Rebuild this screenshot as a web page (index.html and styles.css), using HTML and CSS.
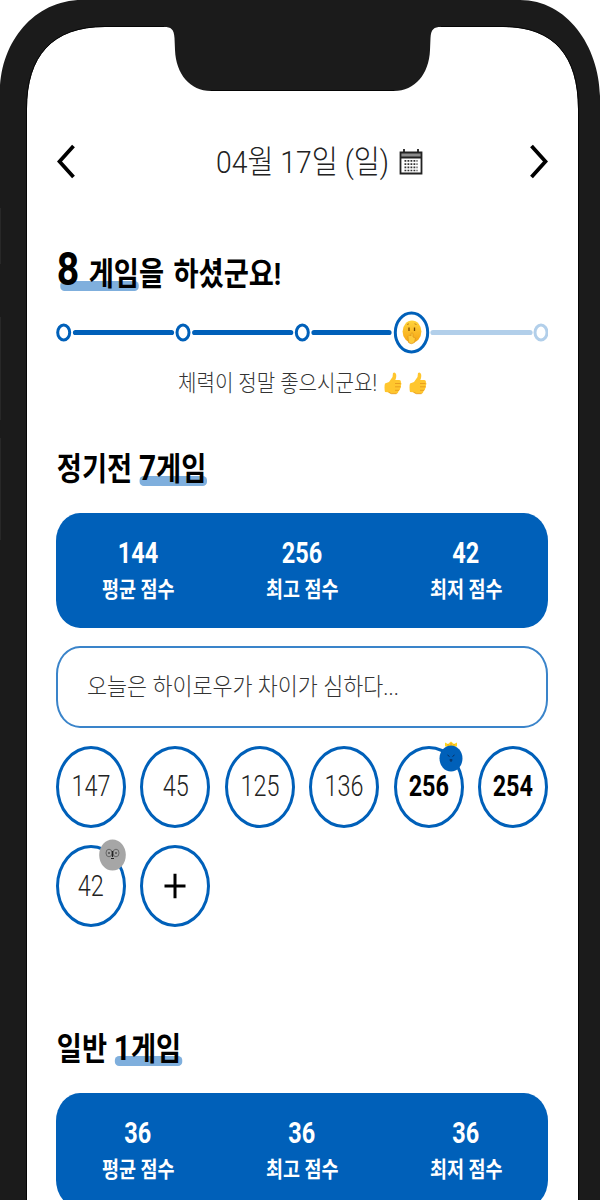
FILE: index.html
```html
<!DOCTYPE html>
<html lang="ko">
<head>
<meta charset="utf-8">
<title>볼링 점수 기록</title>
<link rel="stylesheet" href="styles.css">
</head>
<body>
<div class="phone">
  <svg class="frame" width="600" height="1200" viewBox="0 0 600 1200" aria-hidden="true">
    <path fill="#1b1b1b" fill-rule="evenodd" d="M0 1200V90C1 42 34 0 82 0H520C567 0 599 46 600 96V1200ZM27 1200V109C27 56 52 27 105 27H164C171 27 174 29 174.500 38L175 50C176 74 190 91 211 91H394C415 91 429 74 430 50L430.500 38C431 29 434 27 441 27H503C554 27 578 56 578 109V1200Z"/>
    <path fill="none" stroke="#050505" d="M26.500 1200V109C26.500 56 52 26.500 105 26.500H164M211 90.500H394M441 26.500H503C554 26.500 578.500 56 578.500 109V1200"/>
    <path stroke="#282828" d="M.5 208v56M.5 317v103M.5 438v102"/>
  </svg>
  <main class="screen">
    <header class="date-nav">
      <svg width="18" height="36" viewBox="0 0 18 36"><path class="chevron" d="M16.500 2 2.500 17.500l14 15.500"/></svg>
      <div class="date">
        <span class="date-text">04월 17일 (일)</span>
        <svg class="calendar" width="24" height="27" viewBox="0 0 24 27"><path fill="#8c8c8c" d="M2 4h20v5H2z"/><path fill="none" stroke="#222" stroke-width="1.800" d="M1.500 3.500h21v21h-21zM1.500 8.500h21M5 0v4M19 0v4"/><path stroke="#333" stroke-width="1.700" stroke-dasharray="1.800 1.200" d="M5.500 11.800h13M5.500 15.100h13M5.500 18.400h13M5.500 21.500h13"/></svg>
      </div>
      <svg width="18" height="36" viewBox="0 0 18 36"><path class="chevron" d="M1.500 2 15.500 17.500l-14 15.500"/></svg>
    </header>

    <h1 class="title summary-title"><span class="mark"><span class="big">8</span> 게임</span>을 하셨군요!</h1>
    <svg class="progress" width="492" height="44" viewBox="0 0 492 44">
      <g fill="#fff" stroke="#0060b9" stroke-width="3">
        <ellipse cx="7.700" cy="21.500" rx="6" ry="7.500"/><ellipse cx="127" cy="21.500" rx="6" ry="7.500"/><ellipse cx="246.300" cy="21.500" rx="6" ry="7.500"/>
        <ellipse cx="355.500" cy="21.500" rx="16.200" ry="19.400"/><ellipse cx="485" cy="21.500" rx="6" ry="7.500" stroke="#b2cfea"/>
      </g>
      <g fill="none" stroke="#0060b9" stroke-width="5.200" stroke-linecap="round"><path d="M19.500 21.500h96M138.700 21.500h96M258 21.500h75"/><path stroke="#b2cfea" d="M377 21.500h97"/></g>
      <defs><linearGradient id="face" x2="0" y2="1"><stop stop-color="#ffd43b"/><stop offset="1" stop-color="#f6a414"/></linearGradient></defs>
      <ellipse cx="356" cy="20.500" rx="9.400" ry="11" fill="url(#face)"/>
      <path fill="none" stroke="#754600" stroke-width="1.300" d="M353 16.500v3.500M358.500 16.500v3.500"/>
      <path fill="none" stroke="#b87512" stroke-width=".8" d="M351 13.500l2-.7M358.500 12.800l2 .7"/>
      <path fill="#fdca3a" stroke="#d98f19" stroke-width=".6" d="M352 25.500c1-1.500 2.500-1.500 3-.5v-2.500q1-1.500 2 0v3.500l2.500 1-1 4.500q-3.500 2.500-6 0z"/>
    </svg>
    <p class="cheer"><span class="cheer-text">체력이 정말 좋으시군요!</span>
      <svg class="thumb" width="18" height="23" viewBox="0 0 18 23"><path fill="#ffc62e" d="M1 11.500 5 10 8.500 5 9 1q2-1.500 3 1 .8 3-.7 6h4q2 .2 1.500 2.300 1.200 1.400 0 3 .7 2-.6 3 .3 2.200-1.600 2.600Q14 22 11 21.800H7l-3-1.500L1 20Q0 15 1 11.500z"/><path fill="none" stroke="#e5961c" stroke-width=".8" d="M11 11.500h5.500M11 14.800h5.300M11 18.300h4M4.500 20.200l3 1.500h5"/></svg>
      <svg class="thumb" width="18" height="23" viewBox="0 0 18 23"><path fill="#ffc62e" d="M1 11.500 5 10 8.500 5 9 1q2-1.500 3 1 .8 3-.7 6h4q2 .2 1.500 2.300 1.200 1.400 0 3 .7 2-.6 3 .3 2.200-1.600 2.600Q14 22 11 21.800H7l-3-1.500L1 20Q0 15 1 11.500z"/><path fill="none" stroke="#e5961c" stroke-width=".8" d="M11 11.500h5.500M11 14.800h5.300M11 18.300h4M4.500 20.200l3 1.500h5"/></svg>
    </p>

    <h2 class="title">정기전 <span class="mark"><span class="count">7</span>게임</span></h2>
    <section class="stats">
      <div class="stat"><b>144</b><span>평균 점수</span></div>
      <div class="stat"><b>256</b><span>최고 점수</span></div>
      <div class="stat"><b>42</b><span>최저 점수</span></div>
    </section>
    <div class="memo"><span>오늘은 하이로우가 차이가 심하다...</span></div>
    <div class="scores">
      <div class="score"><span>147</span></div>
      <div class="score"><span>45</span></div>
      <div class="score"><span>125</span></div>
      <div class="score"><span>136</span></div>
      <div class="score strong"><span>256</span>
        <svg class="badge best" width="24" height="31" viewBox="0 0 24 31"><path fill="#ffd51c" d="M6 5.500V1.500l3 1.500L12 .5l3 2.500 3-1.500v4z"/><path stroke="#ed8c28" d="M9 3v1.500M12 2v2M15 3v1.500"/><ellipse cx="12" cy="17.500" rx="11.500" ry="13" fill="#0060b9"/><path fill="none" stroke="#092c5b" d="m8.500 14 2 1.500M15.500 14l-2 1.500M10.500 19l3 0M12 18v3"/></svg>
      </div>
      <div class="score strong"><span>254</span></div>
      <div class="score"><span>42</span>
        <svg class="badge worst" width="27" height="32" viewBox="0 0 27 32"><ellipse cx="13.500" cy="16" rx="13.300" ry="15.500" fill="#a6a6a6"/><g fill="none" stroke="#555" stroke-width=".8"><ellipse cx="10" cy="14" rx="3" ry="3.800"/><ellipse cx="17" cy="14" rx="3" ry="3.800"/></g><path fill="none" stroke="#222" stroke-width="1.200" d="M9 14h2M16 14h2M13.500 12v6M12 19.500h3"/></svg>
      </div>
      <div class="score"><svg width="22" height="26" viewBox="0 0 22 26"><path stroke="#000" stroke-width="3" d="M.5 13h21M11 .8v24.400"/></svg></div>
    </div>

    <h2 class="title second">일반 <span class="mark"><span class="count">1</span>게임</span></h2>
    <section class="stats">
      <div class="stat"><b>36</b><span>평균 점수</span></div>
      <div class="stat"><b>36</b><span>최고 점수</span></div>
      <div class="stat"><b>36</b><span>최저 점수</span></div>
    </section>
  </main>
</div>
</body>
</html>
```
FILE: styles.css
```css
* { box-sizing: border-box; }
body { margin: 0; background: #fff; font-family: Roboto, "Noto Sans CJK KR", sans-serif; }
.phone { position: relative; width: 600px; height: 1200px; overflow: hidden; }
.frame { position: absolute; top: 0; left: 0; }
.screen { position: relative; z-index: 0; width: 600px; padding: 137px 52px 0 56px; color: #000; }
.screen svg { display: block; flex: none; }
.date-nav { display: flex; align-items: center; justify-content: space-between; height: 50px; }
.date-nav > svg { margin: 0 .5px; }
.chevron { fill: none; stroke: #000; stroke-width: 3.8; }
.date { display: flex; align-items: center; width: 209px; margin-left: 37px; }
.date-text { flex: none; width: 183px; font-size: 32px; line-height: 48px; font-weight: 300; color: #222; white-space: nowrap; transform: scaleX(.885); transform-origin: left; }

.title { position: relative; width: max-content; height: 46px; margin: 0; padding-left: 1px; font-size: 32px; line-height: 46px; font-weight: 700; white-space: nowrap; transform: scaleX(.853); transform-origin: left; }
.summary-title { margin-top: 62px; word-spacing: 3px; }
.big { font-size: 46px; line-height: 40px; }
.count { font-size: 35px; line-height: 40px; }
.mark { position: relative; }
.mark::after { content: ""; position: absolute; z-index: -1; left: 1px; right: -1px; bottom: 2px; height: 10px; border-radius: 5px / 4px; background: #7fafdd; }
.summary-title .mark::after { left: 4px; right: 0; }
.progress { margin-top: 15.5px; }
.cheer { display: flex; align-items: center; height: 34px; margin: 12px 0 0 122px; gap: 7px; }
.cheer-text { flex: none; width: 199px; font-size: 23px; line-height: 34px; font-weight: 300; color: #333; white-space: nowrap; transform: scaleX(.873); transform-origin: left; }
.cheer + .title { margin-top: 45px; }

.stats { display: grid; grid-template-columns: repeat(3, 1fr); height: 115px; margin-top: 21px; padding-top: 22px; border-radius: 24px / 28px; background: #0060b9; color: #fff; }
.stat { display: flex; flex-direction: column; align-items: center; }
.stat b { font-size: 29px; line-height: 36px; transform: scaleX(.81); }
.stat span { font-size: 22px; line-height: 38px; font-weight: 700; white-space: nowrap; transform: scaleX(.84); }
.memo { display: flex; align-items: center; height: 82px; margin-top: 18px; padding: 0 0 4px 29px; border: 2px solid #3a84ca; border-radius: 24px / 28px; font-size: 24px; font-weight: 300; color: #333; white-space: nowrap; }
.memo span { transform: scaleX(.907); transform-origin: left; }
.scores { display: grid; grid-template-columns: repeat(6, 70px); justify-content: space-between; gap: 17.5px 0; margin-top: 18px; }
.score { position: relative; display: flex; align-items: center; justify-content: center; height: 82px; border: 3px solid #0060b9; border-radius: 50%; font-size: 30px; font-weight: 300; color: #222; }
.score span { margin-top: -2px; transform: scaleX(.78); }
.strong { font-weight: 700; color: #000; }
.badge { position: absolute; }
.best { top: -8px; right: -2px; }
.worst { top: -9px; right: -3px; }
.second { margin-top: 99px; }
```
